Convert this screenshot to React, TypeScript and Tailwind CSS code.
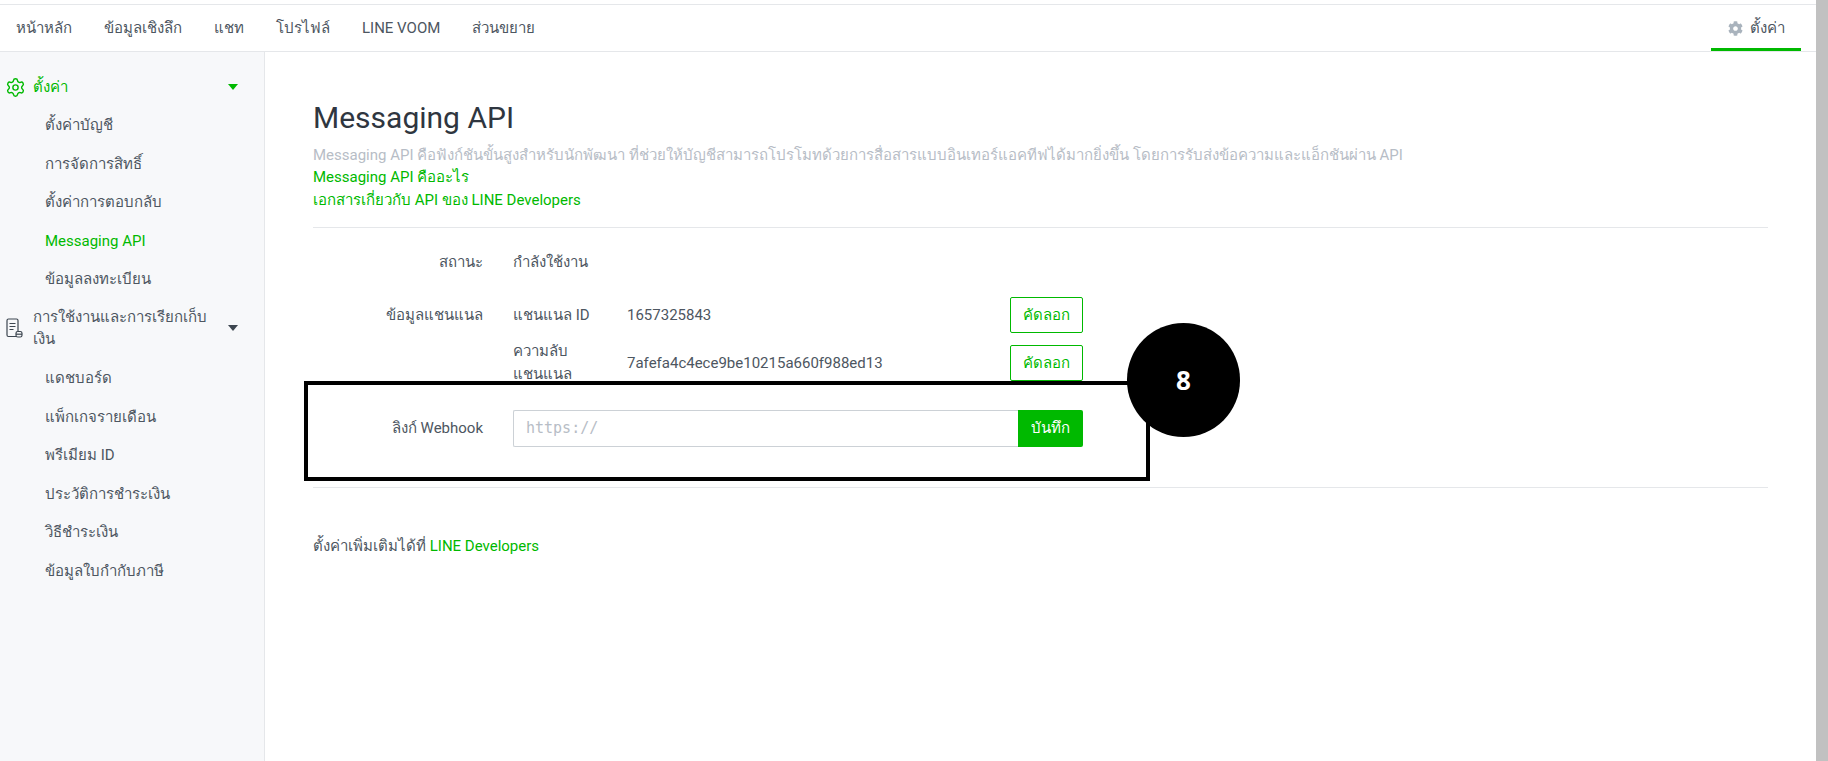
import { Settings } from 'lucide-react';
import { FaCog } from 'react-icons/fa';

const navItems = ['หน้าหลัก', 'ข้อมูลเชิงลึก', 'แชท', 'โปรไฟล์', 'LINE VOOM', 'ส่วนขยาย'];
const settingsLinks = ['ตั้งค่าบัญชี', 'การจัดการสิทธิ์', 'ตั้งค่าการตอบกลับ', 'Messaging API', 'ข้อมูลลงทะเบียน'];
const billingLinks = ['แดชบอร์ด', 'แพ็กเกจรายเดือน', 'พรีเมียม ID', 'ประวัติการชำระเงิน', 'วิธีชำระเงิน', 'ข้อมูลใบกำกับภาษี'];

function Caret({ className }: { className: string }) {
  return (
    <svg width="10" height="6" viewBox="0 0 10 6" className={className}>
      <path d="M0 0h10L5 6z" fill="currentColor" />
    </svg>
  );
}

function BillIcon() {
  return (
    <svg width="17" height="20" viewBox="0 0 17 20" fill="none" stroke="#3d4650" strokeWidth="1.2" className="shrink-0">
      <path d="M10 18.500H2.500A1.500 1.500 0 0 1 1 17V2.500A1.500 1.500 0 0 1 2.500 1h8A1.500 1.500 0 0 1 12 2.500V13" />
      <path d="M3.500 5.500h6M3.500 8.500h6M3.500 11.500h4" />
      <rect x="10" y="13.500" width="6" height="5.500" rx="1.800" />
      <path d="M10 16.200h6" />
    </svg>
  );
}

function SideLink({ label, active }: { label: string; active?: boolean }) {
  return (
    <a className={`flex h-[38.6px] items-center pl-[45px] ${active ? 'text-[#00b900]' : 'text-[#4d5661]'}`}>{label}</a>
  );
}

function CopyButton() {
  return (
    <button className="h-9 w-[73px] rounded-[2px] border border-[#00b900] bg-white text-[#00b900]">คัดลอก</button>
  );
}

export default function App() {
  return (
    <div className="flex h-[761px] overflow-hidden bg-white font-['Roboto','Noto_Sans',sans-serif] text-[15px] text-[#4d5661]">
      <div className="flex min-w-0 flex-1 flex-col pt-1">
        <header className="flex h-[48px] shrink-0 items-center justify-between border-y border-[#e5e7ea]">
          <nav className="flex">
            {navItems.map((item) => (
              <a key={item} className="px-4">
                {item}
              </a>
            ))}
          </nav>
          <div className="mr-[15px] flex h-full w-[90px] items-center justify-center gap-[7px] border-b-[3px] border-[#00b900] pt-[3px]">
            <FaCog className="text-[15px] text-[#a9b3bd]" />
            <span>ตั้งค่า</span>
          </div>
        </header>

        <div className="flex flex-1">
          <aside className="w-[265px] shrink-0 border-r border-[#e5e7ea] bg-[#f7f8fa] pt-[16px]">
            <div className="flex h-[38px] items-center pr-[26px] pl-[5px] text-[#00b900]">
              <Settings size={21} strokeWidth={1.6} />
              <span className="ml-[7px] flex-1">ตั้งค่า</span>
              <Caret className="" />
            </div>
            <div>
              {settingsLinks.map((link) => (
                <SideLink key={link} label={link} active={link === 'Messaging API'} />
              ))}
            </div>
            <div className="mt-[7px] flex items-center pr-[26px] pl-[6px] leading-[22.5px] text-[#4d5661]">
              <BillIcon />
              <span className="ml-[10px] w-[185px]">การใช้งานและการเรียกเก็บเงิน</span>
              <Caret className="ml-auto shrink-0 text-[#3d4650]" />
            </div>
            <div className="mt-[8px]">
              {billingLinks.map((link) => (
                <SideLink key={link} label={link} />
              ))}
            </div>
          </aside>

          <main className="relative flex-1 pt-[43px] pr-[48px] pl-[48px]">
            <h1 className="text-[30px] leading-[45px] text-[#2f3640]">Messaging API</h1>
            <div className="mt-[3.5px] leading-[22.5px]">
              <p className="text-[#b7bdc6]">
                Messaging API คือฟังก์ชันขั้นสูงสำหรับนักพัฒนา ที่ช่วยให้บัญชีสามารถโปรโมทด้วยการสื่อสารแบบอินเทอร์แอคทีฟได้มากยิ่งขึ้น โดยการรับส่งข้อความและแอ็กชันผ่าน API
              </p>
              <a className="block text-[#00b900]">Messaging API คืออะไร</a>
              <a className="block text-[#00b900]">เอกสารเกี่ยวกับ API ของ LINE Developers</a>
            </div>

            <div className="mt-[16px] border-y border-[#e5e7ea] pt-[23px] pb-[40px]">
              <div className="flex h-[23px] items-center">
                <div className="w-[170px] text-right">สถานะ</div>
                <div className="ml-[30px]">กำลังใช้งาน</div>
              </div>

              <div className="mt-[23px] flex">
                <div className="w-[170px] pt-[7px] text-right">ข้อมูลแชนแนล</div>
                <div className="ml-[30px] w-[570px]">
                  <div className="flex h-9 items-center">
                    <div className="w-[114px]">แชนแนล ID</div>
                    <div className="flex-1">1657325843</div>
                    <CopyButton />
                  </div>
                  <div className="mt-3 flex h-9 items-center">
                    <div className="w-[114px] pr-[30px] leading-[23px]">ความลับแชนแนล</div>
                    <div className="flex-1">7afefa4c4ece9be10215a660f988ed13</div>
                    <CopyButton />
                  </div>
                </div>
              </div>

              <div className="mt-[29px] flex items-center">
                <div className="w-[170px] text-right">ลิงก์ Webhook</div>
                <div className="ml-[30px] flex h-[37px] w-[570px]">
                  <input
                    readOnly
                    placeholder="https://"
                    className="min-w-0 flex-1 rounded-l-[2px] border border-r-0 border-[#ccd1d6] px-3 font-['DejaVu_Sans_Mono',monospace] text-[15px] outline-none placeholder:text-[#b7bdc6]"
                  />
                  <button className="w-[65px] rounded-r-[2px] bg-[#00b900] text-white">บันทึก</button>
                </div>
              </div>
            </div>

            <p className="mt-[47px]">
              ตั้งค่าเพิ่มเติมได้ที่ <a className="text-[#00b900]">LINE Developers</a>
            </p>

            {/* annotation drawn over the page */}
            <div className="absolute top-[329px] left-[39px] h-[100px] w-[846px] border-4 border-black" />
            <div className="absolute top-[271px] left-[862px] flex h-[114px] w-[113px] items-center justify-center rounded-full bg-black font-['Open_Sans',sans-serif] text-[26px] font-bold text-white">
              8
            </div>
          </main>
        </div>
      </div>
      <div className="w-3 shrink-0 bg-[#c1c1c1]" />
    </div>
  );
}
